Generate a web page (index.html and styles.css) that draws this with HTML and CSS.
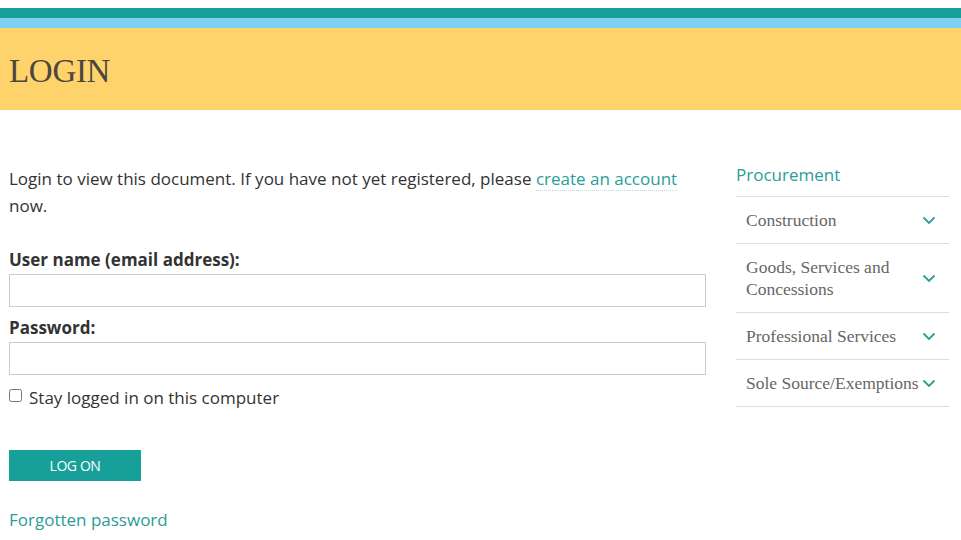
FILE: index.html
```html
<!DOCTYPE html>
<html lang="en">
<head>
    <meta charset="UTF-8">
    <meta name="viewport" content="width=device-width, initial-scale=1.0">
    <title>Login</title>
    <link rel="stylesheet" href="styles.css">
</head>
<body>
    <div class="stripes">
        <div class="stripe-teal"></div>
        <div class="stripe-blue"></div>
    </div>
    <div class="page-title">
        <h1>LOGIN</h1>
    </div>

    <div class="layout">
        <div class="main">
            <p class="intro">Login to view this document. If you have not yet registered, please <a href="#" class="dotted">create an account</a> now.</p>

            <form class="login-form">
                <label for="username">User name (email address):</label>
                <input type="text" id="username" name="username">

                <label for="password">Password:</label>
                <input type="password" id="password" name="password">

                <div class="remember">
                    <input type="checkbox" id="remember" name="remember">
                    <label for="remember">Stay logged in on this computer</label>
                </div>

                <button type="button" class="logon">LOG ON</button>
            </form>

            <a href="#" class="forgot">Forgotten password</a>
        </div>

        <div class="sidebar">
            <h3>Procurement</h3>
            <ul class="side-menu">
                <li><span>Construction</span><svg class="chev" viewBox="0 0 14 9"><path d="M1.5 1.5 L7 7 L12.5 1.5"/></svg></li>
                <li><span>Goods, Services and Concessions</span><svg class="chev" viewBox="0 0 14 9"><path d="M1.5 1.5 L7 7 L12.5 1.5"/></svg></li>
                <li><span>Professional Services</span><svg class="chev" viewBox="0 0 14 9"><path d="M1.5 1.5 L7 7 L12.5 1.5"/></svg></li>
                <li><span>Sole Source/Exemptions</span><svg class="chev" viewBox="0 0 14 9"><path d="M1.5 1.5 L7 7 L12.5 1.5"/></svg></li>
            </ul>
        </div>
    </div>
</body>
</html>
```

FILE: styles.css
```css
body {
    margin: 0;
    padding: 0;
    font-family: "Open Sans", Arial, sans-serif;
    font-size: 17px;
    color: #333;
    background-color: #fff;
}

a {
    color: #2a9d96;
    text-decoration: none;
}

.stripes {
    margin-top: 8px;
}

.stripe-teal {
    height: 10px;
    background-color: #17a09a;
}

.stripe-blue {
    height: 10px;
    background-color: #7dd0f2;
}

.page-title {
    height: 82px;
    background-color: #ffd36b;
    display: flex;
    align-items: center;
    padding-left: 9px;
}

.page-title h1 {
    margin: 4px 0 0 0;
    font-family: "Liberation Serif", serif;
    font-weight: normal;
    font-size: 33px;
    color: #4b4640;
    letter-spacing: -0.3px;
}

.layout {
    display: grid;
    grid-template-columns: 697px 213px;
    column-gap: 30px;
    padding-left: 9px;
}

.main {
    padding-top: 55px;
}

.intro {
    margin: 0;
    line-height: 27px;
}

.dotted {
    border-bottom: 1px dotted #b8dedb;
}

.login-form label {
    display: block;
    font-weight: bold;
    line-height: 22px;
}

.login-form input[type="text"],
.login-form input[type="password"] {
    display: block;
    box-sizing: border-box;
    width: 697px;
    height: 33px;
    margin: 0;
    border: 1px solid #ccc;
    background-color: #fff;
}

.login-form > label:first-child {
    margin-top: 30px;
    margin-bottom: 3px;
}

.login-form > label[for="password"] {
    margin-top: 10px;
    margin-bottom: 3px;
}

.remember {
    display: flex;
    align-items: center;
    margin-top: 12px;
}

.remember input {
    margin: 0 7px 0 0;
    width: 13px;
    height: 13px;
    position: relative;
    top: -3px;
}

.remember label {
    font-weight: normal;
}

.logon {
    display: block;
    margin-top: 41px;
    width: 132px;
    height: 31px;
    border: none;
    background-color: #17a09a;
    color: #fff;
    font-family: "Open Sans", Arial, sans-serif;
    font-size: 14px;
    letter-spacing: -0.4px;
    cursor: pointer;
}

.forgot {
    display: inline-block;
    margin-top: 27px;
    line-height: 24px;
}

.sidebar {
    padding-top: 51px;
}

.sidebar h3 {
    margin: 0;
    font-size: 17px;
    font-weight: normal;
    color: #2a9d96;
    line-height: 27px;
    padding-bottom: 8px;
    border-bottom: 1px solid #ddd;
}

.side-menu {
    list-style: none;
    margin: 0;
    padding: 0;
}

.side-menu li {
    display: flex;
    align-items: center;
    justify-content: space-between;
    padding: 12px 0 12px 10px;
    border-bottom: 1px solid #ddd;
    font-family: "Liberation Serif", serif;
    font-size: 17.5px;
    line-height: 22px;
    color: #666;
}

.side-menu li span {
    max-width: 175px;
}

.chev {
    width: 14px;
    height: 9px;
    margin-right: 13px;
    flex-shrink: 0;
}

.chev path {
    fill: none;
    stroke: #2a9d96;
    stroke-width: 1.8;
}
```
